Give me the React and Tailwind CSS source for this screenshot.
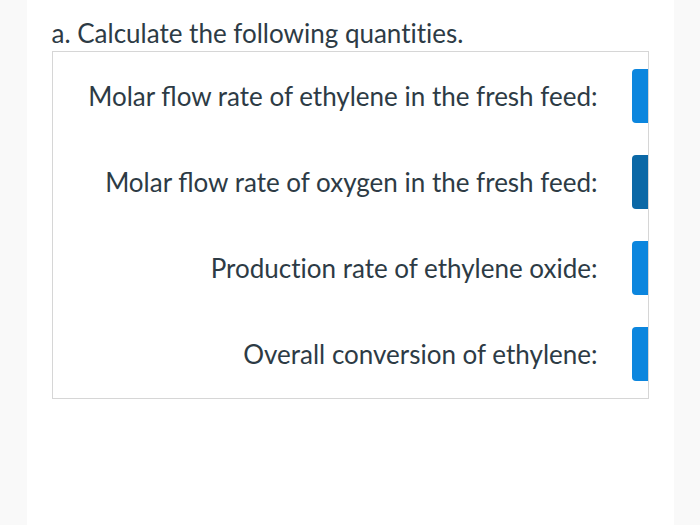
import React from "react";

const rows = [
  { label: "Molar flow rate of ethylene in the fresh feed:", active: false },
  { label: "Molar flow rate of oxygen in the fresh feed:", active: true },
  { label: "Production rate of ethylene oxide:", active: false },
  { label: "Overall conversion of ethylene:", active: false },
];

const App = () => {
  return (
    <div className="flex min-h-[525px] w-[700px] justify-center bg-[#f9f9f9] font-['Lato','Open_Sans',sans-serif] text-[#2d3b45]">
      <div className="w-[647px] bg-white px-[25px] pt-[16px]">
        <h2 className="text-[26px] leading-[34px] [font-feature-settings:'liga'_0]">
          a. Calculate the following quantities.
        </h2>
        <div className="mt-[1px] overflow-hidden border border-[#d6d6d6] py-[17px]">
          <div className="flex flex-col gap-[32px]">
            {rows.map((row) => (
              <div key={row.label} className="flex items-center justify-end gap-[34px]">
                <span
                  className={`text-[26px] leading-[30px] ${
                    row.label.includes("fl") ? "" : "[font-feature-settings:'liga'_0]"
                  }`}
                >
                  {row.label}
                </span>
                <div
                  className={`-mr-[24px] h-[54px] w-[40px] shrink-0 rounded-[4px] ${
                    row.active ? "bg-[#0b68a6]" : "bg-[#0c86de]"
                  }`}
                />
              </div>
            ))}
          </div>
        </div>
      </div>
    </div>
  );
};

export default App;
